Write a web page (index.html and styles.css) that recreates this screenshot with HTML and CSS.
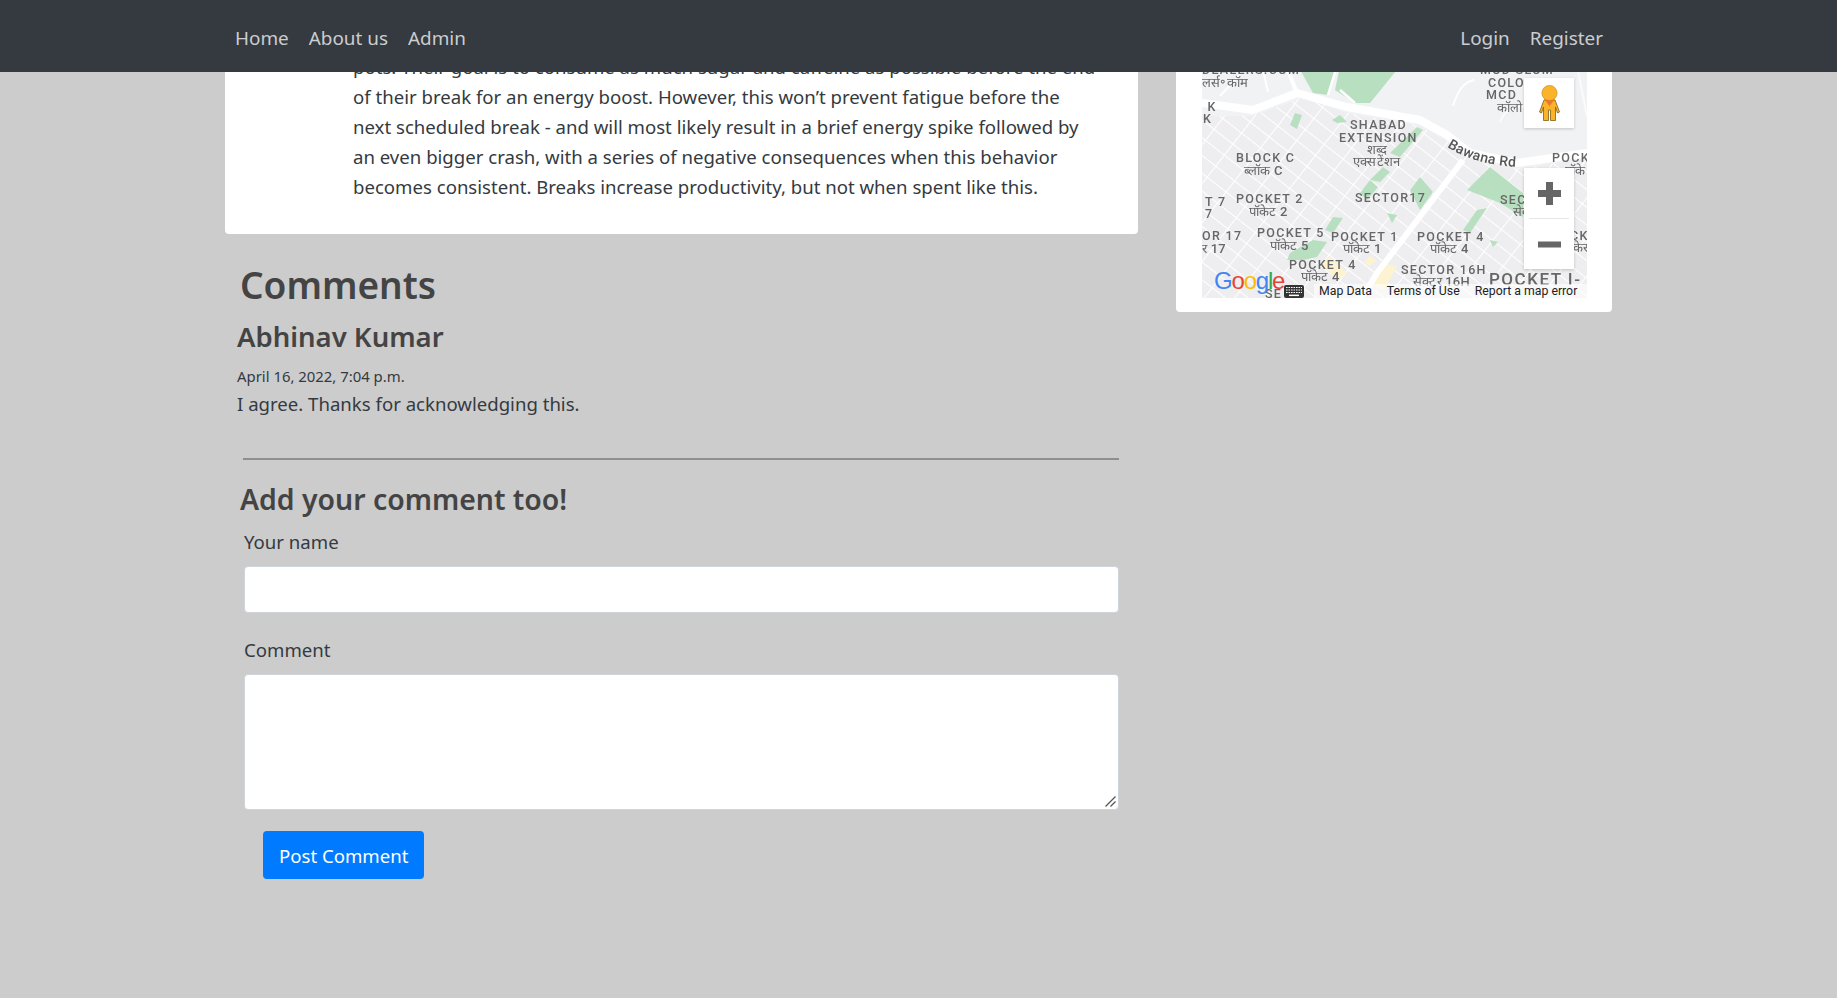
FILE: index.html
```html
<!DOCTYPE html>
<html lang="en">
<head>
    <meta charset="UTF-8">
    <title>Post</title>
    <link rel="stylesheet" href="styles.css">
</head>
<body>

<nav class="navbar">
    <div class="nav-links">
        <a href="#">Home</a>
        <a href="#">About us</a>
        <a href="#">Admin</a>
    </div>
    <div class="nav-links">
        <a href="#">Login</a>
        <a href="#">Register</a>
    </div>
</nav>

<div class="page">
    <div class="main-col">
        <div class="card post">
            <p>pots. Their goal is to consume as much sugar and caffeine as possible before the end<br>
            of their break for an energy boost. However, this won’t prevent fatigue before the<br>
            next scheduled break - and will most likely result in a brief energy spike followed by<br>
            an even bigger crash, with a series of negative consequences when this behavior<br>
            becomes consistent. Breaks increase productivity, but not when spent like this.</p>
        </div>

        <h2 class="comments-title">Comments</h2>
        <div class="comment">
            <h4>Abhinav Kumar</h4>
            <div class="comment-date">April 16, 2022, 7:04 p.m.</div>
            <div class="comment-text">I agree. Thanks for acknowledging this.</div>
        </div>

        <hr class="divider">

        <h3 class="add-title">Add your comment too!</h3>
        <form class="comment-form">
            <label for="name">Your name</label>
            <input type="text" id="name" class="field">
            <label for="comment">Comment</label>
            <div class="area-wrap">
                <textarea id="comment" class="field area"></textarea>
                <svg class="grip" viewBox="0 0 11 11" width="11" height="11">
                    <path d="M.5 10.5L10.5 .5M5.5 10.5L10.5 5.5" stroke="#555" stroke-width="1.3" fill="none"/>
                </svg>
            </div>
            <button type="button" class="btn-post">Post Comment</button>
        </form>
    </div>

    <div class="side-col">
        <div class="card map-card">
            <div class="map">
                <svg class="map-art" viewBox="0 0 385 232" width="385" height="232">
                    <defs>
                        <pattern id="blocks" width="24" height="14" patternUnits="userSpaceOnUse" patternTransform="rotate(38)">
                            <rect width="24" height="14" fill="#eeeef0"/>
                            <path d="M0 0H24M0 0V14" stroke="#fff" stroke-width="2" fill="none"/>
                        </pattern>
                        <path id="bawana" d="M245 81Q275 100 320 101"/>
                    </defs>
                    <rect width="385" height="232" fill="#f1f2f4"/>
                    <polygon points="0,50 50,50 100,32 145,47 218,60 245,75 268,93 315,103 385,93 385,232 0,232" fill="url(#blocks)"/>

                    <!-- parks -->
                    <g fill="#b9dfc1">
                        <polygon points="96,0 111,27 126,29 135,0"/>
                        <polygon points="138,0 198,0 168,37 153,37 133,24"/>
                        <polygon points="88,59 93,47 100,49 95,63"/>
                        <polygon points="130,54 138,49 145,56 135,57"/>
                        <polygon points="215,61 221,64 198,91 188,87"/>
                        <polygon points="168,114 181,101 188,106 178,116"/>
                        <polygon points="208,124 218,111 231,126 218,144"/>
                        <polygon points="158,127 168,114 176,121 165,134"/>
                        <polygon points="288,101 321,127 321,151 298,137 265,124"/>
                        <polygon points="275,144 285,142 268,167 261,164"/>
                        <polygon points="185,147 195,149 190,157"/>
                        <polygon points="288,174 296,176 291,181"/>
                        <polygon points="131,151 141,152 131,167 123,164"/>
                        <polygon points="88,187 111,174 125,176 115,191 101,194 85,194"/>
                    </g>
                    <g fill="#fdf3d0">
                        <polygon points="128,191 145,207 135,214 118,198"/>
                        <polygon points="181,197 195,201 181,224 170,218"/>
                        <polygon points="168,190 174,194 168,200 162,196"/>
                    </g>

                    <!-- roads -->
                    <g stroke="#fff" fill="none" stroke-linejoin="round">
                        <path d="M0 37L51 44L95 27L145 41L218 54L245 69L268 87L315 97L385 87" stroke-width="8"/>
                        <path d="M261 94L175 207L160 232" stroke-width="6"/>
                        <path d="M95 27L84 0" stroke-width="4"/>
                        <path d="M126 29L135 0M153 37L138 24" stroke-width="2.5"/>
                        <path d="M60 0L66 26M18 30L40 6M251 40C256 24 262 16 272 14" stroke-width="2"/>
                        <path d="M375 0L385 50M298 56C304 40 320 38 330 44" stroke="#fbfbfc" stroke-width="2"/>
                    </g>

                    <!-- labels -->
                    <g class="map-label">
                        <text x="0" y="8">DEALERS.COM</text>
                        <text x="278" y="8">MUD SLUM</text>
                        <text x="286" y="21">COLO</text>
                        <text x="284" y="33">MCD</text>
                        <text x="-8" y="45">K K</text>
                        <text x="1" y="57">K</text>
                        <text x="148" y="63">SHABAD</text>
                        <text x="137" y="76">EXTENSION</text>
                        <text x="34" y="96">BLOCK C</text>
                        <text x="350" y="96">POCK</text>
                        <text x="34" y="137">POCKET 2</text>
                        <text x="153" y="136">SECTOR17</text>
                        <text x="298" y="138">SEC</text>
                        <text x="3" y="140">T 7</text>
                        <text x="3" y="152">7</text>
                        <text x="55" y="171">POCKET 5</text>
                        <text x="129" y="175">POCKET 1</text>
                        <text x="215" y="175">POCKET 4</text>
                        <text x="0" y="174">OR 17</text>
                        <text x="368" y="174">CK</text>
                        <text x="87" y="203">POCKET 4</text>
                        <text x="199" y="208">SECTOR 16H</text>
                        <text x="63" y="232">SE</text>
                    </g>
                    <g class="map-label map-label-hi">
                        <text x="0" y="21">लर्स॰कॉम</text>
                        <text x="295" y="46">कॉलो</text>
                        <text x="165" y="88">शब्द</text>
                        <text x="151" y="100">एक्सटेंशन</text>
                        <text x="42" y="109">ब्लॉक C</text>
                        <text x="363" y="109">पॉके</text>
                        <text x="47" y="150">पॉकेट 2</text>
                        <text x="311" y="150">सेक</text>
                        <text x="68" y="184">पॉकेट 5</text>
                        <text x="141" y="187">पॉकेट 1</text>
                        <text x="228" y="187">पॉकेट 4</text>
                        <text x="0" y="187">र 17</text>
                        <text x="371" y="186">केर</text>
                        <text x="99" y="215">पॉकेट 4</text>
                        <text x="211" y="220">सेक्टर 16H</text>
                    </g>
                    <text class="map-road"><textPath href="#bawana">Bawana Rd</textPath></text>
                    <text class="map-big" x="287" y="219">POCKET I-</text>
                </svg>

                <div class="map-btn pegman-btn">
                    <svg viewBox="0 0 21 36" width="21" height="36">
                        <path d="M5 15H16L20.5 27L18.5 28L16.5 22V35.5H11.5V25H9.5V35.5H4.5V22L2.5 28L.5 27Z" fill="#fbb32a" stroke="#7f6014" stroke-width=".8"/>
                        <circle cx="10.5" cy="8" r="7.6" fill="#fbb32a" stroke="#c98f1c" stroke-width=".7"/>
                        <path d="M4.5 13.5C7 15.5 14 15.5 16.5 13.5L10.5 21Z" fill="#e8792b"/>
                    </svg>
                </div>

                <div class="map-btn map-zoom">
                    <div class="zoom-btn">
                        <svg viewBox="0 0 23 23" width="23" height="23"><path d="M8 0H15V8H23V15H15V23H8V15H0V8H8Z" fill="#666"/></svg>
                    </div>
                    <div class="zoom-sep"></div>
                    <div class="zoom-btn">
                        <svg viewBox="0 0 23 23" width="23" height="23"><rect y="8.5" width="23" height="6" fill="#666"/></svg>
                    </div>
                </div>

                <div class="google-logo"><span class="g-blue">G</span><span class="g-red">o</span><span class="g-yellow">o</span><span class="g-blue">g</span><span class="g-green">l</span><span class="g-red">e</span></div>

                <div class="map-footer">
                    <svg class="kbd" viewBox="0 0 20 13" width="20" height="13">
                        <rect width="20" height="13" rx="2" fill="#333"/>
                        <path d="M2 2.5H18M2 5H18M2 7.5H18" stroke="#fff" stroke-width="1.1" stroke-dasharray="1.6 .9" fill="none"/>
                        <rect x="5" y="9.6" width="10" height="1.5" fill="#fff"/>
                    </svg>
                    <span>Map Data</span>
                    <span>Terms of Use</span>
                    <span>Report a map error</span>
                </div>
            </div>
        </div>
    </div>
</div>

</body>
</html>
```

FILE: styles.css
```css
* {
    box-sizing: border-box;
}
html, body {
    height: 100%;
}
body {
    margin: 0;
    overflow: hidden;
    background-color: #ccc;
    color: #343a40;
    font-family: "Noto Sans", "Open Sans", sans-serif;
    font-size: 18.6px;
    line-height: 30px;
}
a {
    text-decoration: none;
}

.navbar {
    position: fixed;
    top: 0;
    left: 0;
    right: 0;
    z-index: 10;
    height: 72px;
    background-color: #343a40;
    display: flex;
    justify-content: space-between;
    padding: 23px 224px 0 225px;
}
.nav-links {
    display: flex;
    gap: 20px;
    padding: 0 10px;
}
.nav-links a {
    color: rgba(255, 255, 255, .75);
    font-size: 18.9px;
}

.page {
    display: flex;
    align-items: flex-start;
    gap: 38px;
    padding: 0 225px;
    margin-top: 52px;
}
.main-col {
    width: 913px;
}
.side-col {
    width: 436px;
}
.card {
    background-color: #fff;
    border-radius: 4px;
}

.post {
    padding: 0 20px 30px 128px;
    height: 182px;
}
.post p {
    margin: 0;
    white-space: nowrap;
}

.comments-title {
    margin: 28px 0 0 15px;
    font-size: 37px;
    line-height: 46px;
    font-weight: 600;
    color: #444;
}
.comment {
    padding: 0 12px;
    margin-top: 9px;
}
.comment h4 {
    margin: 0;
    font-size: 27.5px;
    line-height: 40px;
    font-weight: 600;
    color: #444;
}
.comment-date {
    font-size: 14.9px;
    line-height: 25px;
    margin-top: 7px;
}
.comment-text {
    line-height: 30px;
}
.divider {
    margin: 39px 19px 0 18px;
    border: 0;
    border-top: 2px solid #8f8f8f;
}
.add-title {
    margin: 19px 0 0 15px;
    font-size: 28.4px;
    line-height: 40px;
    font-weight: 600;
    color: #444;
}
.comment-form {
    padding: 0 19px;
    display: flex;
    flex-direction: column;
    align-items: flex-start;
}
.comment-form label {
    margin-top: 8px;
}
.field {
    display: block;
    width: 100%;
    height: 47px;
    margin-top: 9px;
    margin-bottom: 14px;
    background-color: #fff;
    border: 1px solid #ced4da;
    border-radius: 4px;
    outline: none;
}
.area-wrap {
    position: relative;
    width: 100%;
    margin-top: 9px;
    margin-bottom: 21px;
}
.area {
    height: 136px;
    margin: 0;
    resize: none;
}
.grip {
    position: absolute;
    right: 3px;
    bottom: 3px;
}
.btn-post {
    margin-left: 19px;
    padding: 0 16px;
    height: 48px;
    background-color: #007bff;
    color: #fff;
    border: none;
    border-radius: 4px;
    font-family: inherit;
    font-size: 18.6px;
}

.map-card {
    height: 260px;
    padding: 0 26px 14px 26px;
}
.map {
    position: relative;
    width: 385px;
    height: 246px;
    overflow: hidden;
}
.map-art {
    position: absolute;
    left: 0;
    top: 14px;
    filter: blur(.3px);
}
.map-label text {
    font-family: Roboto, sans-serif;
    font-size: 12.5px;
    font-weight: 500;
    letter-spacing: 1.3px;
    fill: #666;
}
.map-label-hi text {
    font-size: 13px;
    letter-spacing: .2px;
}
.map-road {
    font-family: Roboto, sans-serif;
    font-size: 14px;
    font-weight: 500;
    letter-spacing: .3px;
    fill: #555;
}
.map-big {
    font-family: Roboto, sans-serif;
    font-size: 17px;
    font-weight: 500;
    letter-spacing: 1.5px;
    fill: #666;
}
.map-btn {
    position: absolute;
    left: 322px;
    width: 50px;
    background-color: #fff;
    box-shadow: 0 1px 3px rgba(0, 0, 0, .2);
}
.pegman-btn {
    top: 26px;
    height: 50px;
    display: flex;
    align-items: center;
    justify-content: center;
}
.map-zoom {
    top: 116px;
    height: 101px;
}
.zoom-btn {
    height: 50px;
    display: flex;
    align-items: center;
    justify-content: center;
}
.zoom-sep {
    height: 1px;
    margin: 0 5px;
    background-color: #e6e6e6;
}
.google-logo {
    position: absolute;
    left: 12px;
    top: 215px;
    font-family: "Liberation Sans", sans-serif;
    font-size: 24px;
    line-height: 28px;
    letter-spacing: -1.2px;
}
.g-blue { color: #4285f4; }
.g-red { color: #ea4335; }
.g-yellow { color: #fbbc05; }
.g-green { color: #34a853; }
.map-footer {
    position: absolute;
    left: 82px;
    right: 0;
    top: 232px;
    height: 14px;
    display: flex;
    align-items: center;
    gap: 15px;
    font-family: Roboto, sans-serif;
    font-size: 12.3px;
    line-height: 14px;
    color: #222;
    white-space: nowrap;
    background: linear-gradient(to right, transparent 30px, rgba(255, 255, 255, .6) 30px);
}
```
